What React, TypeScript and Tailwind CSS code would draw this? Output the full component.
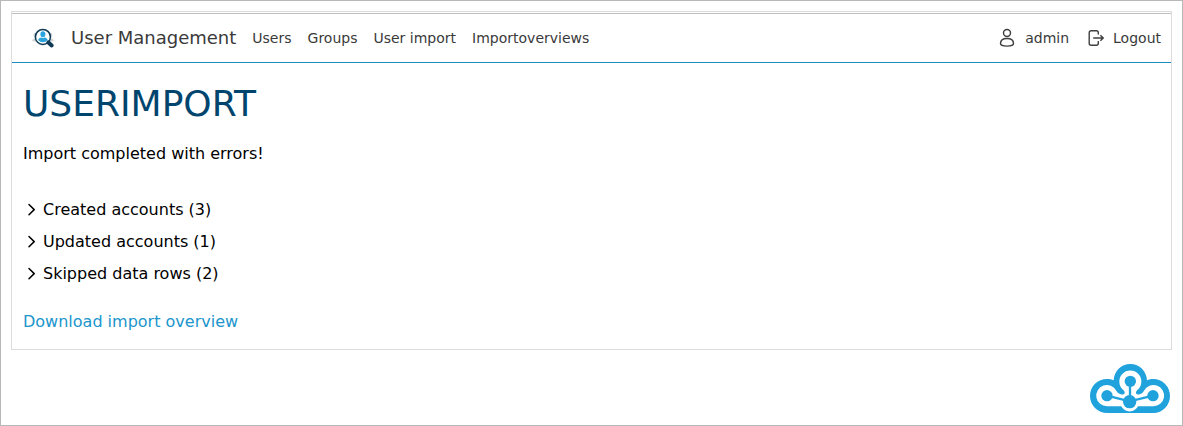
import React from "react";

const navItems = ["Users", "Groups", "User import", "Importoverviews"];
const sections = ["Created accounts (3)", "Updated accounts (1)", "Skipped data rows (2)"];

function BrandIcon() {
  return (
    <svg viewBox="0 0 24 24" className="h-6 w-6 shrink-0">
      <g fill="#d3d6d8">
        <circle cx="4" cy="9" r="2.600" />
        <circle cx="17.800" cy="9" r="2.600" />
        <path d="M0 15Q.5 12 5 11.500V16zM22 15q-.5-3-5-3.500V16z" />
      </g>
      <circle cx="10.900" cy="10.900" r="7.500" fill="#fff" stroke="#0f3a55" strokeWidth="1.500" />
      <ellipse cx="10.900" cy="8.200" rx="2.500" ry="3" fill="#2ba3dd" />
      <path d="M6.200 14.200q0-2.400 3.300-2.800l1.400.9 1.400-.9q3.300.4 3.300 2.800-1.800 2-4.700 2t-4.700-2z" fill="#2ba3dd" />
      <path d="m16.400 16.400 3.300 3" stroke="#0f3a55" strokeWidth="4" strokeLinecap="round" />
    </svg>
  );
}

function UserIcon() {
  return (
    <svg viewBox="0 0 16 20" className="h-5 w-4" fill="none" stroke="#404040" strokeWidth="1.450">
      <circle cx="8" cy="5" r="3.500" />
      <path d="M1.500 15.600C1.500 12.500 4 10.400 8 10.400s6.500 2.100 6.500 5.200c0 1.800-2.300 2.500-6.500 2.500s-6.500-.7-6.500-2.500z" />
    </svg>
  );
}

function LogoutIcon() {
  return (
    <svg viewBox="0 0 17 20" className="h-5 w-[17px]" fill="none" stroke="#404040" strokeWidth="1.400">
      <path d="M11.300 6.500V4.700a2 2 0 0 0-2-2H4.200a2 2 0 0 0-2 2v10.600a2 2 0 0 0 2 2h5.100a2 2 0 0 0 2-2v-2.300M6.200 10h10M13.400 7.200l2.800 2.800-2.800 2.800" />
    </svg>
  );
}

function CloudLogo() {
  return (
    <svg viewBox="60 72 240 147" className="h-[49px] w-20">
      <path
        d="M111 219a51 51 0 0 1-51-51c0-29 23-51 51-51 8 0 14 1 20 4 1-27 22-49 50-49s49 22 50 49c6-3 12-4 19-4a50 51 0 0 1 50 51c0 28-22 51-50 51z"
        fill="#20a3dd"
      />
      <path
        d="M111 199a32 32 0 1 1 28-47c5 9 14 13 22 11 5-2 4-8-1-13a33 33 0 1 1 42 0c-5 5-6 11-1 13 8 2 16-2 21-11a32 32 0 1 1 28 47h-46a28 28 0 0 1-50 0z"
        fill="#fff"
      />
      <path d="M111 167l68 17 70-17M180 124v60" fill="none" stroke="#20a3dd" strokeWidth="7" />
      <circle cx="179" cy="185" r="20" fill="#20a3dd" />
      <circle cx="111" cy="167" r="17" fill="#20a3dd" />
      <circle cx="249" cy="167" r="17" fill="#20a3dd" />
      <circle cx="181" cy="124" r="17" fill="#20a3dd" />
    </svg>
  );
}

export default function App() {
  return (
    <div className="flex h-[426px] w-[1183px] flex-col border border-[#b8b8b8] bg-white p-2.5 font-['DejaVu_Sans',sans-serif] text-base text-black">
      <div className="h-[339px] w-[1161px] shrink-0 border border-[#dcdcdc] pt-px">
        <header className="flex h-[50px] items-center border-t border-b border-t-[#bfbfbf] border-b-[#1d8bbd] pr-2.5 pl-5 text-sm text-[#3a3a3a]">
          <BrandIcon />
          <span className="ml-[15px] text-lg">User Management</span>
          <nav className="ml-4 flex gap-4">
            {navItems.map((item) => (
              <a key={item} href="#">{item}</a>
            ))}
          </nav>
          <div className="ml-auto flex items-center">
            <UserIcon />
            <span className="ml-2.5">admin</span>
            <span className="ml-[18px]"><LogoutIcon /></span>
            <span className="ml-[9px]">Logout</span>
          </div>
        </header>
        <main className="px-[11px] pt-[21px]">
          <h1 className="text-4xl leading-10 text-[#00456e]">USERIMPORT</h1>
          <p className="mt-[18px]">Import completed with errors!</p>
          <div className="mt-8 flex flex-col gap-2">
            {sections.map((label) => (
              <button key={label} className="flex h-6 items-center text-left">
                <svg viewBox="0 0 16 16" className="mr-1 h-4 w-4" fill="none" stroke="currentColor" strokeWidth="1.500" strokeLinecap="round" strokeLinejoin="round">
                  <path d="m6 2.500 5.200 5.100L6 12.700" />
                </svg>
                {label}
              </button>
            ))}
          </div>
          <a href="#" className="mt-6 block text-[#2095cc]">Download import overview</a>
        </main>
      </div>
      <footer className="mt-[14px] flex justify-end pr-0.5">
        <CloudLogo />
      </footer>
    </div>
  );
}
